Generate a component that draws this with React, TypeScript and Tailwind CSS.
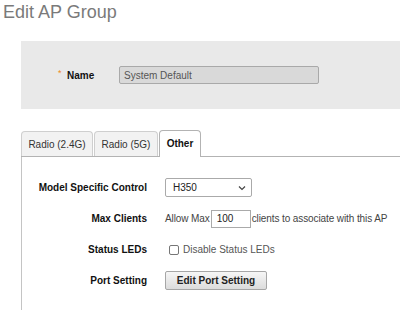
export default function App() {
  return (
    <div className="w-[400px] h-[310px] overflow-hidden bg-white font-['Liberation_Sans',Arial,sans-serif] text-[10px] text-[#222]">
      <h1 className="mt-[1px] pl-[3px] h-[22px] text-[18px] leading-[22px] text-[#7a7a7a]">Edit AP Group</h1>

      {/* name panel */}
      <div className="mt-[18px] ml-[21px] h-[68px] bg-[#e9e9e9] pt-[25px]">
        <div className="flex items-center h-[18px]">
          <span className="ml-[37px] w-[9px] text-[9px] leading-none text-[#f08a24] -mt-[4px]">*</span>
          <span className="w-[52px] font-bold text-[#111]">Name</span>
          <div className="w-[200px] h-[18px] bg-[#d9d9d9] border border-[#a9a9a9] rounded-[2px] pl-[4px] flex items-center text-[#555]">
            System Default
          </div>
        </div>
      </div>

      {/* tabs */}
      <div className="mt-[22px] ml-[21px] flex items-end gap-[1px] border-b border-[#b3b3b3] h-[26px]">
        <div className="w-[72px] h-[25px] bg-[#f2f2f2] border border-b-0 border-[#cfcfcf] rounded-t-[4px] flex items-center justify-center text-[#333]">Radio (2.4G)</div>
        <div className="w-[64px] h-[25px] bg-[#f2f2f2] border border-b-0 border-[#cfcfcf] rounded-t-[4px] flex items-center justify-center text-[#333]">Radio (5G)</div>
        <div className="w-[42px] h-[27px] -mb-[1px] bg-white border border-b-0 border-[#b3b3b3] rounded-t-[4px] flex items-center justify-center font-bold text-[#111] pb-[2px]">Other</div>
      </div>

      {/* tab content */}
      <div className="ml-[21px] border-l border-[#c4c4c4] pt-[15px] h-[160px]">
        <div className="flex items-center h-[31px]">
          <span className="w-[125px] text-right font-bold text-[#111]">Model Specific Control</span>
          <div className="ml-[18px] w-[87px] h-[19px] bg-white border border-[#aaa] rounded-[2px] flex items-center justify-between pl-[7px] pr-[5px]">
            <span>H350</span>
            <svg width="8" height="6" viewBox="0 0 8 6" fill="none" stroke="#444" strokeWidth="1.2">
              <path d="M1 1.5 L4 4.5 L7 1.5" />
            </svg>
          </div>
        </div>
        <div className="flex items-center h-[31px]">
          <span className="w-[125px] text-right font-bold text-[#111]">Max Clients</span>
          <span className="ml-[18px] text-[#444] tracking-[-0.1px]">Allow Max</span>
          <div className="ml-[1px] w-[40px] h-[18px] bg-white border border-[#aaa] flex items-center pl-[5px]">100</div>
          <span className="ml-[1px] text-[#444] tracking-[-0.1px]">clients to associate with this AP</span>
        </div>
        <div className="flex items-center h-[31px]">
          <span className="w-[125px] text-right font-bold text-[#111]">Status LEDs</span>
          <span className="ml-[22px] w-[10px] h-[10px] border border-[#767676] rounded-[2px] bg-white" />
          <span className="ml-[4px] text-[#555]">Disable Status LEDs</span>
        </div>
        <div className="flex items-center h-[31px]">
          <span className="w-[125px] text-right font-bold text-[#111]">Port Setting</span>
          <button className="ml-[18px] w-[102px] h-[19px] border border-[#a6a6a6] rounded-[2px] bg-gradient-to-b from-[#f6f6f6] to-[#dcdcdc] font-bold text-[#222] text-[10px] leading-none">
            Edit Port Setting
          </button>
        </div>
      </div>
    </div>
  );
}
